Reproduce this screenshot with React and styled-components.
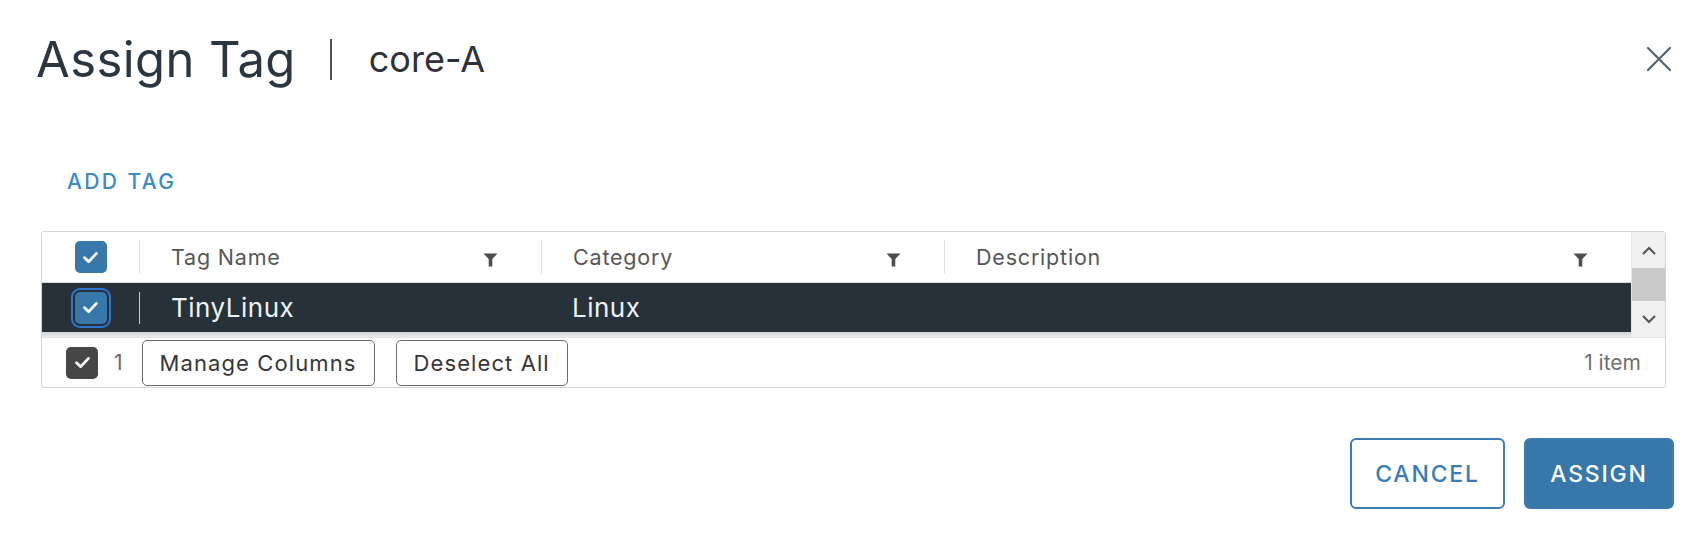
import React from 'react';
import styled, { createGlobalStyle } from 'styled-components';

const Global = createGlobalStyle`
  html, body { margin: 0; padding: 0; background: #fff; }
  body { font-family: Inter, "Noto Sans", sans-serif; color: #333; }
  * { box-sizing: border-box; }
`;

const Modal = styled.div`
  width: 1698px;
  height: 538px;
  display: flex;
  flex-direction: column;
  padding: 0 24px 0 36px;
  background: #fff;
`;

const Header = styled.header`
  display: flex;
  align-items: center;
  height: 118px;
`;

const Title = styled.h1`
  margin: 0;
  font-size: 49px;
  font-weight: 400;
  line-height: 1;
  letter-spacing: 0.4px;
  color: #2c3640;
`;

const TitleSep = styled.span`
  width: 2px;
  height: 41px;
  margin: 0 37px 0 34px;
  background: #4b555e;
`;

const SubTitle = styled.span`
  font-size: 36px;
  color: #2f3338;
  line-height: 1;
  flex: 1;
`;

const CloseButton = styled.button`
  width: 30px;
  height: 30px;
  padding: 0;
  border: none;
  background: transparent;
  display: flex;
  align-items: center;
  justify-content: center;
  cursor: pointer;
`;

const AddTag = styled.a`
  display: block;
  margin: 52px 0 0 31px;
  font-size: 21px;
  letter-spacing: 2.4px;
  font-weight: 500;
  color: #3e8ac3;
  line-height: 24px;
`;

const Grid = styled.div`
  margin: 37px 8px 0 5px;
  border: 1px solid #cfd4d7;
  border-radius: 3px;
  display: flex;
  flex-direction: column;
`;

const GridMain = styled.div`
  display: flex;
`;

const GridTable = styled.div`
  flex: 1;
  display: flex;
  flex-direction: column;
`;

const Row = styled.div`
  display: grid;
  grid-template-columns: 97px 402px 403px 1fr;
  height: ${p => (p.$head ? '51px' : '49px')};
  background: ${p => (p.$selected ? '#263139' : '#fff')};
  border-bottom: ${p => (p.$head ? '1px solid #d7dbde' : 'none')};
  color: ${p => (p.$selected ? '#eef1f3' : '#575757')};
  font-size: ${p => (p.$head ? '21.5px' : '26px')};
  letter-spacing: ${p => (p.$head ? '0.8px' : '0.5px')};
`;

const CheckCell = styled.div`
  display: flex;
  align-items: center;
  justify-content: center;
`;

const Cell = styled.div`
  display: flex;
  align-items: center;
`;

const Divider = styled.span`
  width: 1px;
  height: ${p => (p.$tall ? '34px' : '32px')};
  background: ${p => (p.$light ? '#c7ccd0' : '#dde1e3')};
  flex-shrink: 0;
`;

const CellText = styled.span`
  flex: 1;
  padding-left: 31px;
  white-space: nowrap;
`;

const FilterBtn = styled.span`
  display: flex;
  margin: 6px 43px 0 0;
`;

const Strip = styled.div`
  height: 5px;
  background: linear-gradient(#cfd3d6, #e9ebec);
`;

const Scrollbar = styled.div`
  width: 34px;
  background: #f0f0f0;
  border-left: 1px solid #e4e4e4;
  display: flex;
  flex-direction: column;
  align-items: stretch;
`;

const ScrollArrow = styled.div`
  height: 36px;
  display: flex;
  align-items: center;
  justify-content: center;
`;

const ScrollThumb = styled.div`
  height: 33px;
  background: #c9c9c9;
`;

const Box = styled.span`
  width: 32px;
  height: 32px;
  border-radius: 5px;
  background: ${p => p.$bg};
  display: flex;
  align-items: center;
  justify-content: center;
  box-shadow: ${p => (p.$focus ? '0 0 0 2px #263139, 0 0 0 4px #2f76d2' : 'none')};
`;

const Footer = styled.div`
  display: flex;
  align-items: center;
  height: 50px;
  border-top: 1px solid #e2e5e7;
  padding: 0 24px 0 24px;
`;

const Count = styled.span`
  font-size: 21px;
  color: #6c6c6c;
  margin: 0 19px 0 16px;
`;

const GridButton = styled.button`
  height: 46px;
  padding: 0 17px;
  margin-right: 21px;
  border: 1px solid #6b6b6b;
  border-radius: 5px;
  background: #fff;
  font-family: inherit;
  font-size: 22px;
  letter-spacing: 1.1px;
  color: #363636;
`;

const ItemCount = styled.span`
  margin-left: auto;
  font-size: 21px;
  color: #707070;
`;

const Actions = styled.div`
  display: flex;
  justify-content: flex-end;
  gap: 19px;
  margin-top: 50px;
`;

const ActionButton = styled.button`
  height: 71px;
  width: ${p => p.$w}px;
  border-radius: 6px;
  border: 2px solid #3b7db3;
  background: ${p => (p.$primary ? '#3777aa' : '#fff')};
  color: ${p => (p.$primary ? '#fff' : '#3b7db3')};
  font-family: inherit;
  font-size: 23px;
  font-weight: 500;
  letter-spacing: 1.8px;
`;

const Check = () => (
  <svg width="17" height="13" viewBox="0 0 16 13">
    <path d="M2 6.8 L6.2 10.6 L14 2.4" fill="none" stroke="#fff" strokeWidth="2.8" strokeLinecap="round" strokeLinejoin="round" />
  </svg>
);

const Filter = () => (
  <svg width="15" height="14" viewBox="0 0 15 14">
    <path d="M0.5 0.5 H14.5 L9.3 6 V13.5 H5.7 V6 Z" fill="#4d4d4d" />
  </svg>
);

const Chevron = ({ down }) => (
  <svg width="14" height="9" viewBox="0 0 14 9">
    <path d={down ? 'M1.5 1.5 L7 7 L12.5 1.5' : 'M1.5 7.5 L7 2 L12.5 7.5'} fill="none" stroke="#555" strokeWidth="2" strokeLinecap="round" />
  </svg>
);

const CloseIcon = () => (
  <svg width="26" height="26" viewBox="0 0 26 26">
    <path d="M2 2 L24 24 M24 2 L2 24" stroke="#56636e" strokeWidth="2.2" strokeLinecap="round" />
  </svg>
);

const columns = ['Tag Name', 'Category', 'Description'];
const row = { name: 'TinyLinux', category: 'Linux', description: '' };

export default function App() {
  return (
    <>
      <Global />
      <Modal>
        <Header>
          <Title>Assign Tag</Title>
          <TitleSep />
          <SubTitle>core-A</SubTitle>
          <CloseButton aria-label="Close">
            <CloseIcon />
          </CloseButton>
        </Header>

        <AddTag>ADD TAG</AddTag>

        <Grid>
          <GridMain>
            <GridTable>
              <Row $head>
                <CheckCell>
                  <Box $bg="#3877aa"><Check /></Box>
                </CheckCell>
                {columns.map(c => (
                  <Cell key={c}>
                    <Divider $tall />
                    <CellText>{c}</CellText>
                    <FilterBtn><Filter /></FilterBtn>
                  </Cell>
                ))}
              </Row>
              <Row $selected>
                <CheckCell>
                  <Box $bg="#3877aa" $focus><Check /></Box>
                </CheckCell>
                <Cell>
                  <Divider $light />
                  <CellText>{row.name}</CellText>
                </Cell>
                <Cell>
                  <CellText>{row.category}</CellText>
                </Cell>
                <Cell>
                  <CellText>{row.description}</CellText>
                </Cell>
              </Row>
              <Strip />
            </GridTable>
            <Scrollbar>
              <ScrollArrow><Chevron /></ScrollArrow>
              <ScrollThumb />
              <ScrollArrow><Chevron down /></ScrollArrow>
            </Scrollbar>
          </GridMain>
          <Footer>
            <Box $bg="#464646"><Check /></Box>
            <Count>1</Count>
            <GridButton>Manage Columns</GridButton>
            <GridButton>Deselect All</GridButton>
            <ItemCount>1 item</ItemCount>
          </Footer>
        </Grid>

        <Actions>
          <ActionButton $w={155}>CANCEL</ActionButton>
          <ActionButton $w={150} $primary>ASSIGN</ActionButton>
        </Actions>
      </Modal>
    </>
  );
}
